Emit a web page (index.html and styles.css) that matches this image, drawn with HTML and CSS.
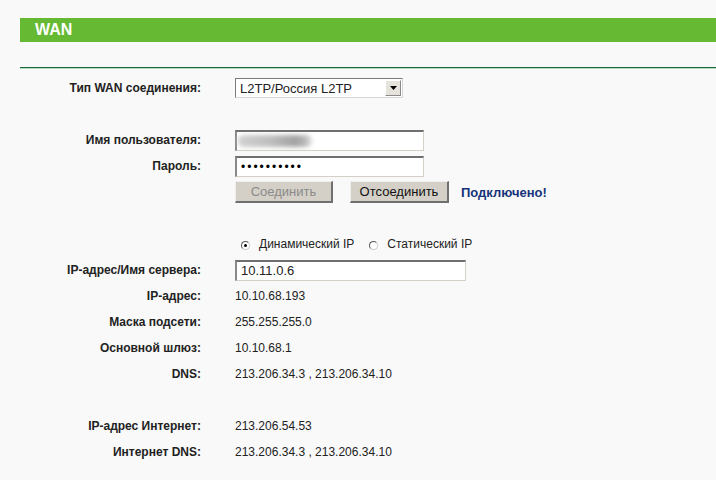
FILE: index.html
```html
<!DOCTYPE html>
<html lang="ru">
<head>
    <meta charset="UTF-8">
    <title>WAN</title>
    <link rel="stylesheet" href="styles.css">
</head>
<body>

    <div class="title-bar">WAN</div>
    <div class="rule"></div>

    <div class="form">
        <div class="row">
            <div class="label">Тип WAN соединения:</div>
            <div class="value">
                <div class="select">
                    <span class="select-text">L2TP/Россия L2TP</span>
                    <span class="select-btn">
                        <svg width="7" height="4" viewBox="0 0 7 4"><path d="M0 0H7L3.5 4Z" fill="#000"/></svg>
                    </span>
                </div>
            </div>
        </div>
        <div class="row"></div>

        <div class="row">
            <div class="label">Имя пользователя:</div>
            <div class="value">
                <div class="field field-user"><span class="blur"></span></div>
            </div>
        </div>
        <div class="row">
            <div class="label">Пароль:</div>
            <div class="value">
                <div class="field field-user"><span class="dots">••••••••••</span></div>
            </div>
        </div>
        <div class="row">
            <div class="label"></div>
            <div class="value buttons">
                <button class="btn" disabled>Соединить</button>
                <button class="btn">Отсоединить</button>
                <span class="status">Подключено!</span>
            </div>
        </div>
        <div class="row"></div>

        <div class="row">
            <div class="label"></div>
            <div class="value radios">
                <span class="radio checked"></span><span class="radio-text">Динамический IP</span>
                <span class="radio"></span><span class="radio-text">Статический IP</span>
            </div>
        </div>
        <div class="row">
            <div class="label">IP-адрес/Имя сервера:</div>
            <div class="value">
                <div class="field field-server">10.11.0.6</div>
            </div>
        </div>
        <div class="row">
            <div class="label">IP-адрес:</div>
            <div class="value">10.10.68.193</div>
        </div>
        <div class="row">
            <div class="label">Маска подсети:</div>
            <div class="value">255.255.255.0</div>
        </div>
        <div class="row">
            <div class="label">Основной шлюз:</div>
            <div class="value">10.10.68.1</div>
        </div>
        <div class="row">
            <div class="label">DNS:</div>
            <div class="value">213.206.34.3 , 213.206.34.10</div>
        </div>
        <div class="row"></div>

        <div class="row">
            <div class="label">IP-адрес Интернет:</div>
            <div class="value">213.206.54.53</div>
        </div>
        <div class="row">
            <div class="label">Интернет DNS:</div>
            <div class="value">213.206.34.3 , 213.206.34.10</div>
        </div>
    </div>

</body>
</html>
```

FILE: styles.css
```css
body {
    margin: 0;
    background-color: #f9f9f9;
    font-family: "Liberation Sans", Arial, sans-serif;
    font-size: 12px;
    color: #222;
}
.title-bar {
    margin: 18px 0 0 20px;
    height: 24px;
    line-height: 24px;
    padding-left: 15px;
    background-color: #66b933;
    color: #fff;
    font-size: 16px;
    font-weight: bold;
}
.rule {
    margin: 25px 0 0 20px;
    height: 1px;
    background-color: #1b6a3c;
    border-bottom: 1px solid #b6dcc0;
}
.form {
    margin-top: 6px;
}
.row {
    display: flex;
    align-items: center;
    height: 26px;
}
.label {
    width: 201px;
    text-align: right;
    font-weight: bold;
    color: #222;
}
.value {
    margin-left: 34px;
    display: flex;
    align-items: center;
    color: #222;
}
.select {
    width: 168px;
    height: 20px;
    box-sizing: border-box;
    background: #fff;
    border-top: 1px solid #7a7a7a;
    border-left: 1px solid #7a7a7a;
    border-right: 1px solid #d8d8d8;
    border-bottom: 1px solid #d8d8d8;
    display: flex;
    align-items: center;
    justify-content: space-between;
}
.select-text {
    padding-left: 4px;
    font-size: 13px;
}
.select-btn {
    width: 16px;
    height: 16px;
    margin-right: 1px;
    background: #e6e3dc;
    border-top: 1px solid #fff;
    border-left: 1px solid #fff;
    border-right: 1px solid #8a8a8a;
    border-bottom: 1px solid #8a8a8a;
    box-sizing: border-box;
    display: flex;
    align-items: center;
    justify-content: center;
}
.field {
    height: 21px;
    box-sizing: border-box;
    background: #fff;
    border-top: 2px solid #6f6f6f;
    border-left: 2px solid #8a8a8a;
    border-right: 1px solid #d4d0c8;
    border-bottom: 1px solid #d4d0c8;
    display: flex;
    align-items: center;
    padding-left: 4px;
    font-size: 13px;
}
.field-user {
    width: 189px;
}
.field-server {
    width: 231px;
}
.blur {
    width: 74px;
    height: 12px;
    margin-left: -3px;
    border-radius: 5px;
    background: linear-gradient(90deg, #d2d2d2, #bdbdbd 45%, #a2a2a2 78%, #b8b8b8 90%, #e2e2e2);
    filter: blur(2px);
}
.dots {
    font-size: 12px;
    letter-spacing: 2px;
    color: #000;
}
.btn {
    height: 22px;
    padding: 0;
    background-color: #d4d0c8;
    border-top: 1px solid #eeeeee;
    border-left: 1px solid #eeeeee;
    border-right: 2px solid #6f6f6f;
    border-bottom: 2px solid #6f6f6f;
    font-family: "Liberation Sans", Arial, sans-serif;
    font-size: 13px;
    color: #111;
}
.btn:first-child {
    width: 98px;
    margin-right: 17px;
}
.btn:nth-child(2) {
    width: 99px;
    margin-right: 12px;
}
.btn:disabled {
    color: #8a8a8a;
}
.status {
    color: #16347a;
    font-weight: bold;
    font-size: 13px;
}
.radios {
    margin-left: 40px;
}
.radio {
    width: 9px;
    height: 9px;
    box-sizing: border-box;
    border-radius: 50%;
    border: 1px solid #555;
    border-right-color: #ccc;
    border-bottom-color: #ccc;
    background: #fff;
    margin-top: 2px;
    position: relative;
}
.radio.checked::after {
    content: "";
    position: absolute;
    left: 2px;
    top: 2px;
    width: 3px;
    height: 3px;
    border-radius: 50%;
    background: #000;
}
.radio-text {
    margin-left: 9px;
    margin-right: 15px;
}
```
